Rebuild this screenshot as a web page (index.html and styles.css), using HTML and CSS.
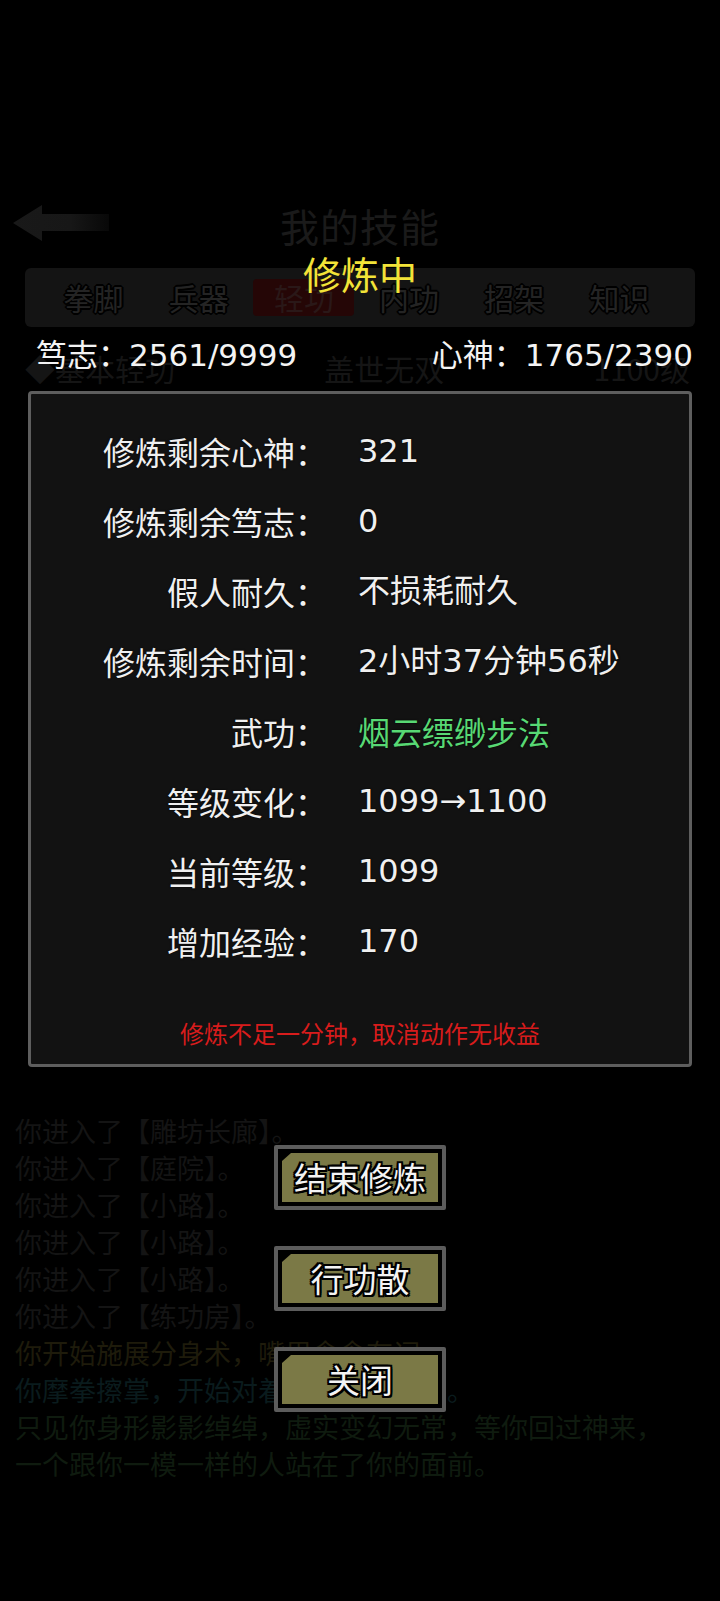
FILE: index.html
```html
<!doctype html>
<html lang="zh-CN">
  <head>
    <meta charset="utf-8"/>
    <title>修炼中</title>
    <meta name="viewport" content="width=device-width,initial-scale=1.0"/>
    <link rel="stylesheet" href="styles.css">
  </head>
  <body>
    <div class="game">
      <div class="topbar">
        <svg class="topbar__back" width="96" height="40" viewBox="0 0 96 40">
          <defs>
            <linearGradient id="shaft" x1="0" x2="1" y1="0" y2="0">
              <stop offset="0" stop-color="#191919"/>
              <stop offset="0.6" stop-color="#171717"/>
              <stop offset="1" stop-color="#080808"/>
            </linearGradient>
          </defs>
          <path d="M0 18 L29 0 L29 9 L96 9 L96 26 L29 26 L29 36 Z" fill="url(#shaft)"/>
        </svg>
        <h1 class="topbar__title">我的技能</h1>
        <span></span>
      </div>

      <ul class="tabs">
        <li class="tabs__item">拳脚</li>
        <li class="tabs__item">兵器</li>
        <li class="tabs__item tabs__item-active">轻功</li>
        <li class="tabs__item">内功</li>
        <li class="tabs__item">招架</li>
        <li class="tabs__item">知识</li>
      </ul>

      <div class="skill">
        <span>◆基本轻功</span>
        <span>盖世无双</span>
        <span>1100级</span>
      </div>

      <div class="skill-list"></div>

      <div class="log">
        <p class="log__line">你进入了【雕坊长廊】。</p>
        <p class="log__line">你进入了【庭院】。</p>
        <p class="log__line">你进入了【小路】。</p>
        <p class="log__line">你进入了【小路】。</p>
        <p class="log__line">你进入了【小路】。</p>
        <p class="log__line">你进入了【练功房】。</p>
        <p class="log__line log__line-yellow">你开始施展分身术，嘴里念念有词</p>
        <p class="log__line log__line-cyan">你摩拳擦掌，开始对着假人练了起来。</p>
        <p class="log__line log__line-green">只见你身形影影绰绰，虚实变幻无常，等你回过神来，</p>
        <p class="log__line log__line-green">一个跟你一模一样的人站在了你的面前。</p>
      </div>
    </div>

    <div class="modal">
      <h2 class="modal__title">修炼中</h2>

      <div class="stats">
        <span>笃志：2561/9999</span>
        <span>心神：1765/2390</span>
      </div>

      <div class="panel">
        <dl class="panel__rows">
          <dt>修炼剩余心神：</dt><dd>321</dd>
          <dt>修炼剩余笃志：</dt><dd>0</dd>
          <dt>假人耐久：</dt><dd>不损耗耐久</dd>
          <dt>修炼剩余时间：</dt><dd>2小时37分钟56秒</dd>
          <dt>武功：</dt><dd class="panel__skill">烟云缥缈步法</dd>
          <dt>等级变化：</dt><dd>1099→1100</dd>
          <dt>当前等级：</dt><dd>1099</dd>
          <dt>增加经验：</dt><dd>170</dd>
        </dl>
        <p class="panel__note">修炼不足一分钟，取消动作无收益</p>
      </div>

      <div class="actions">
        <a class="button"><span class="button__face">结束修炼</span></a>
        <a class="button"><span class="button__face">行功散</span></a>
        <a class="button"><span class="button__face">关闭</span></a>
      </div>
    </div>
  </body>
</html>
```

FILE: styles.css
```css
body {
  font-family: "DejaVu Sans", "Noto Sans CJK SC", sans-serif;
  color: #f0f0f0;
  background-color: #000;
  margin: 0;
  width: 720px;
  height: 1601px;
  position: relative;
  overflow: hidden;
}
p, h1, h2, ul, dl, dd {
  margin: 0;
  padding: 0;
}

/* dimmed game screen behind the dialog */
.game {
  padding-top: 204px;
  color: #181818;
}
.topbar {
  display: grid;
  grid-template-columns: 1fr auto 1fr;
  align-items: center;
  height: 42px;
}
.topbar__back {
  display: block;
  margin-left: 13px;
}
.topbar__title {
  font-family: "Noto Sans CJK SC", sans-serif;
  font-size: 39px;
  font-weight: normal;
  line-height: 42px;
  color: #1a1a1a;
  letter-spacing: 1px;
}
.tabs {
  list-style: none;
  display: grid;
  grid-template-columns: repeat(6, 1fr);
  align-items: center;
  height: 59px;
  margin: 22px 25px 0;
  padding: 0 23px 0 16px;
  background-color: #141414;
  border-radius: 6px;
}
.tabs__item {
  font-family: "Noto Sans CJK SC", sans-serif;
  font-size: 30px;
  line-height: 37px;
  text-align: center;
  margin: 0 2px;
  border-radius: 4px;
  color: #242424;
  text-shadow: -2px 0 0 #000, 2px 0 0 #000, 0 -2px 0 #000, 0 2px 0 #000, -1px -1px 0 #000, 1px 1px 0 #000, 1px -1px 0 #000, -1px 1px 0 #000;
}
.tabs__item-active {
  background-color: #250606;
  color: #2a1818;
  text-shadow: none;
}
.skill {
  display: flex;
  justify-content: space-between;
  margin-top: 26px;
  padding: 0 30px 0 25px;
  font-family: "Noto Sans CJK SC", sans-serif;
  font-size: 30px;
  line-height: 30px;
  color: #151515;
}
.skill-list {
  height: 729px;
}
.log__line {
  font-family: "Noto Sans CJK SC", sans-serif;
  font-size: 27px;
  line-height: 37px;
  padding-left: 15px;
  white-space: nowrap;
  color: #141414;
}
.log__line-yellow {
  color: #1e1b0b;
}
.log__line-cyan {
  color: #0a1b1d;
}
.log__line-green {
  color: #0f1b0f;
}

/* dialog */
.modal {
  position: absolute;
  top: 0;
  left: 0;
  right: 0;
  bottom: 0;
  padding-top: 250px;
  display: flex;
  flex-direction: column;
}
.modal__title {
  font-family: "Noto Sans CJK SC", sans-serif;
  font-size: 38px;
  font-weight: normal;
  line-height: 46px;
  text-align: center;
  color: #f2e338;
}
.stats {
  display: flex;
  justify-content: space-between;
  margin-top: 39px;
  padding: 0 27px 0 36px;
  font-size: 31px;
  line-height: 40px;
  color: #f4f4f4;
}
.panel {
  margin: 16px 28px 0;
  border: 3px solid #5e5e5e;
  border-radius: 4px;
  background-color: #121212;
  padding: 22px 0 15px;
}
.panel__rows {
  display: grid;
  grid-template-columns: 296px 1fr;
  column-gap: 31px;
  grid-auto-rows: 70px;
  align-items: center;
  font-size: 32px;
  line-height: 40px;
  text-shadow: 0 0 2px #000;
}
.panel__rows dt {
  text-align: right;
  font-family: "Noto Sans CJK SC", sans-serif;
}
.panel__skill {
  font-family: "Noto Sans CJK SC", sans-serif;
  color: #58d874;
}
.panel__note {
  margin-top: 41px;
  font-family: "Noto Sans CJK SC", sans-serif;
  font-size: 24px;
  line-height: 32px;
  text-align: center;
  color: #d81c1c;
}
.actions {
  display: flex;
  flex-direction: column;
  align-items: center;
  gap: 36px;
  margin-top: 78px;
}
.button {
  display: block;
  width: 156px;
  padding: 4px;
  border: 4px solid #5c5c5c;
  border-radius: 2px;
  background-color: #000;
  cursor: pointer;
}
.button__face {
  display: block;
  height: 49px;
  background-color: #7b7946;
  clip-path: polygon(9px 0, 100% 0, 100% 100%, 0 100%, 0 8px);
  font-family: "Noto Sans CJK SC", sans-serif;
  font-size: 33px;
  line-height: 49px;
  text-align: center;
  color: #f4f4f4;
  text-shadow: -2px 0 0 #000, 2px 0 0 #000, 0 -2px 0 #000, 0 2px 0 #000, -2px -2px 0 #000, 2px 2px 0 #000, 2px -2px 0 #000, -2px 2px 0 #000;
}
```
